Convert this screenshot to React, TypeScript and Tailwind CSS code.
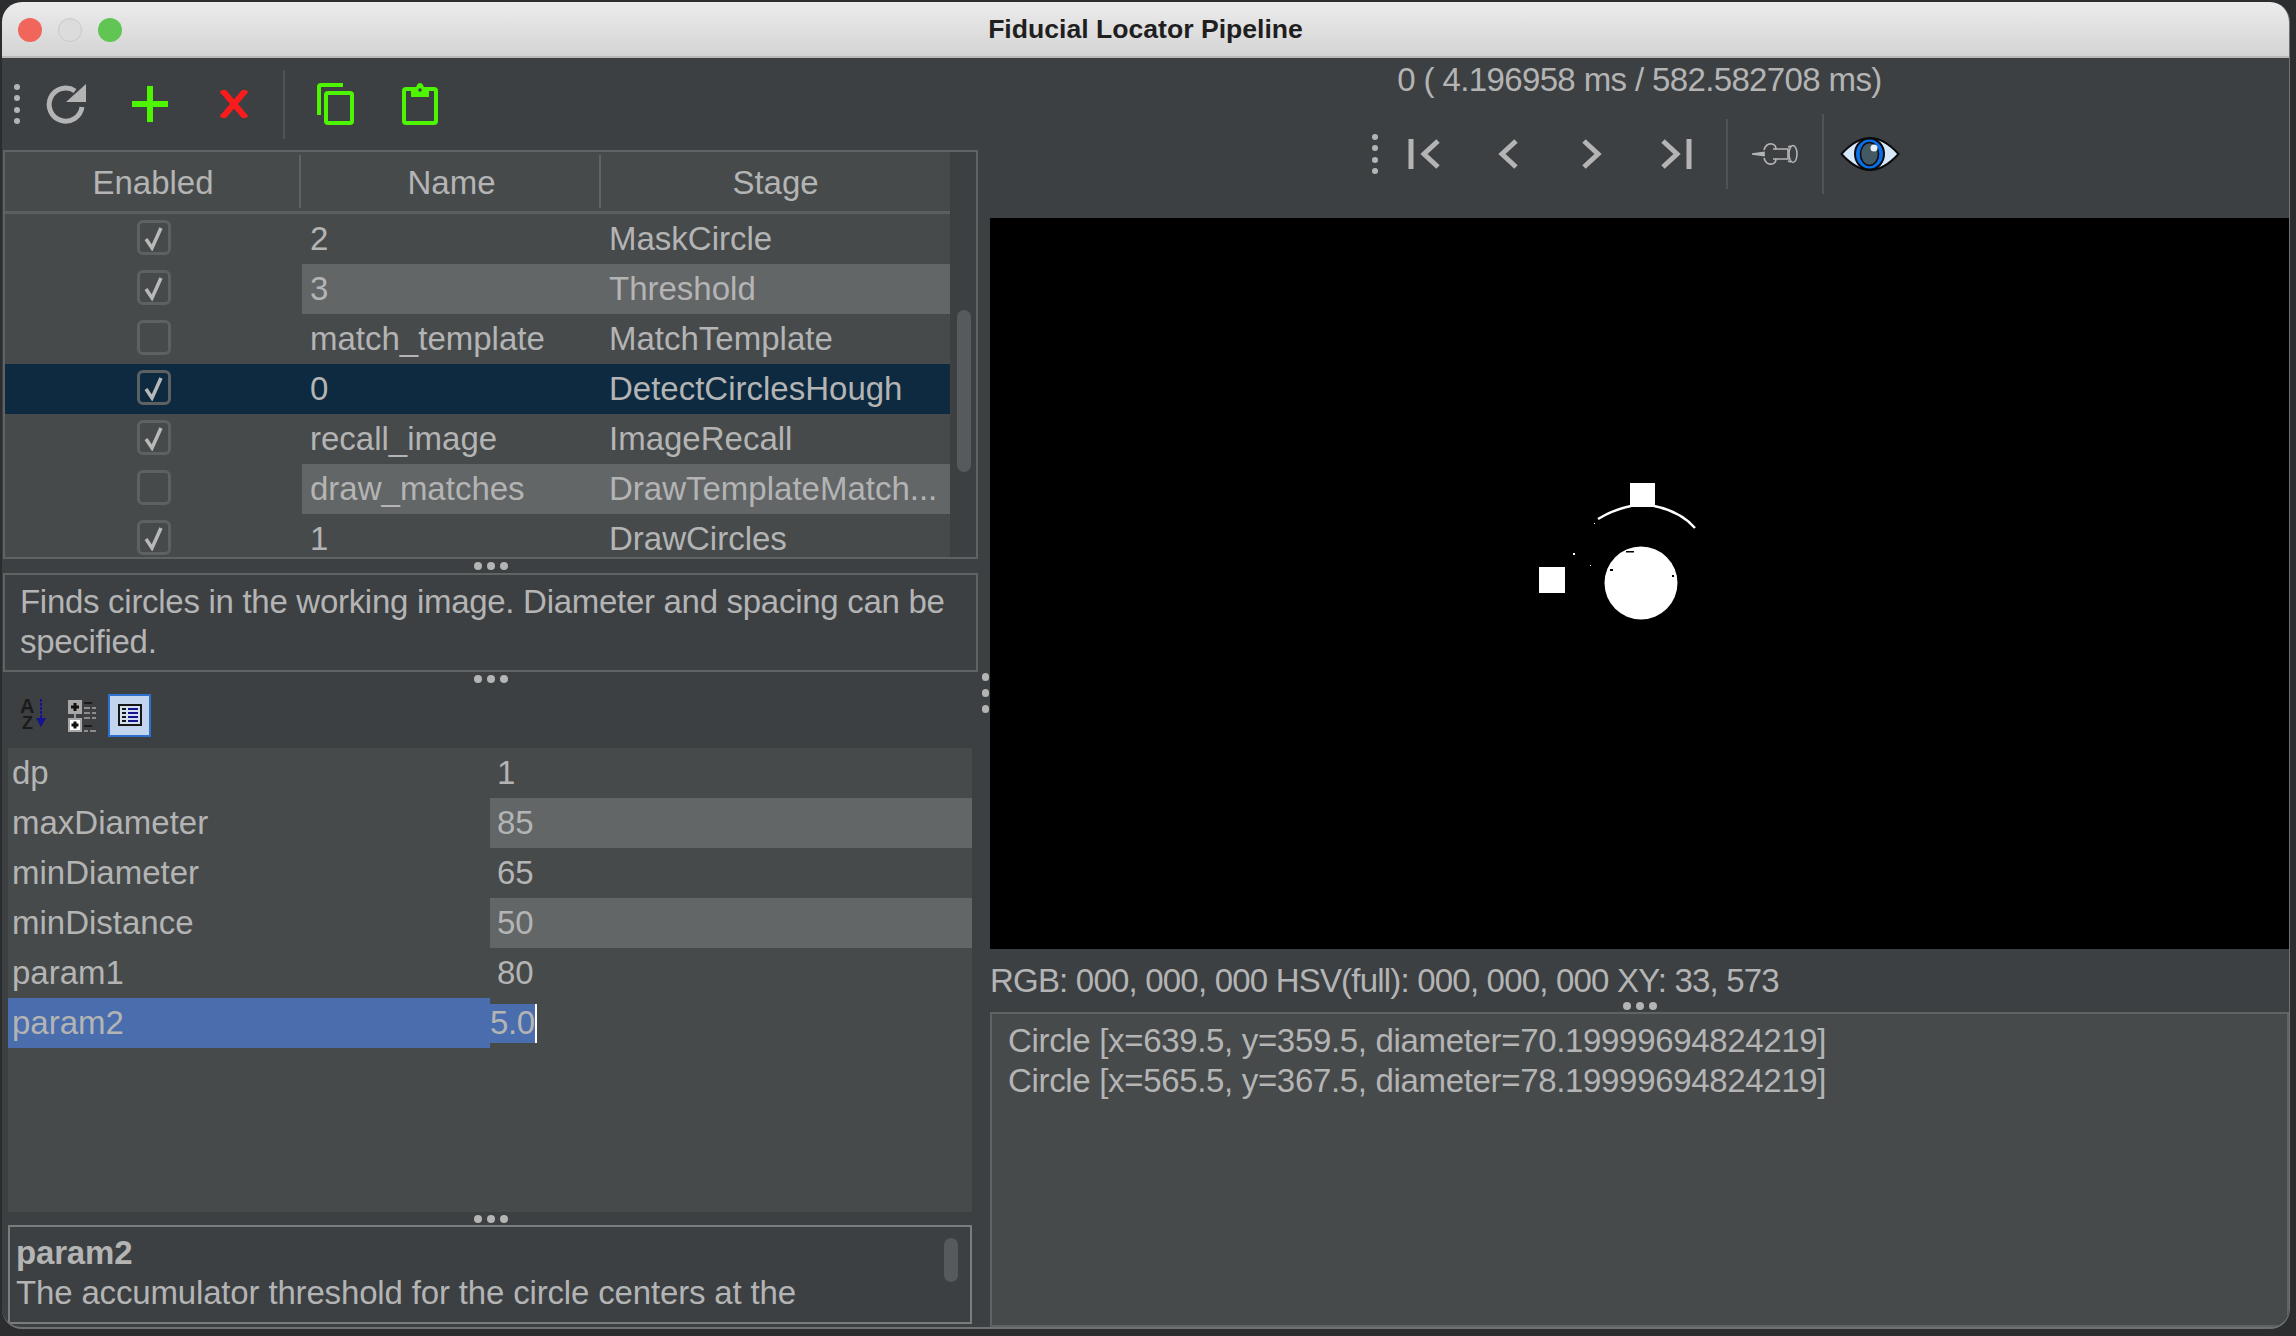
import type { ReactNode } from "react";

const rows = [
  { on: true, name: "2", stage: "MaskCircle" },
  { on: true, name: "3", stage: "Threshold", alt: true },
  { on: false, name: "match_template", stage: "MatchTemplate" },
  { on: true, name: "0", stage: "DetectCirclesHough", selected: true },
  { on: true, name: "recall_image", stage: "ImageRecall" },
  { on: false, name: "draw_matches", stage: "DrawTemplateMatch...", alt: true },
  { on: true, name: "1", stage: "DrawCircles" },
];

const props = [
  { name: "dp", value: "1" },
  { name: "maxDiameter", value: "85", alt: true },
  { name: "minDiameter", value: "65" },
  { name: "minDistance", value: "50", alt: true },
  { name: "param1", value: "80" },
];

function GripH({ className = "" }: { className?: string }) {
  return (
    <div className={`flex items-center justify-center gap-[5px] ${className}`}>
      <span className="h-[8px] w-[8px] rounded-full bg-[#b4b4b4]" />
      <span className="h-[8px] w-[8px] rounded-full bg-[#b4b4b4]" />
      <span className="h-[8px] w-[8px] rounded-full bg-[#b4b4b4]" />
    </div>
  );
}

function GripV() {
  return (
    <div className="flex w-[6px] shrink-0 flex-col gap-[5.5px]">
      <span className="h-[6px] w-[6px] rounded-full bg-[#b4b4b4]" />
      <span className="h-[6px] w-[6px] rounded-full bg-[#b4b4b4]" />
      <span className="h-[6px] w-[6px] rounded-full bg-[#b4b4b4]" />
      <span className="h-[6px] w-[6px] rounded-full bg-[#b4b4b4]" />
    </div>
  );
}

function ToolButton({ children }: { children: ReactNode }) {
  return <div className="flex h-[50px] w-[84px] shrink-0 items-center justify-center">{children}</div>;
}

function Check({ on }: { on: boolean }) {
  return (
    <div className="flex h-[35px] w-[34px] items-center justify-center rounded-[6px] border-[3px] border-[#5d6162]">
      {on && (
        <svg width="22" height="26" viewBox="0 0 22 26">
          <path d="M3 14 L9 23 L18 3" fill="none" stroke="#b8b8b8" strokeWidth="3.5" />
        </svg>
      )}
    </div>
  );
}

function Refresh() {
  return (
    <svg width="42" height="42" viewBox="0 0 42 42">
      <path d="M30 8 A 16.5 16.5 0 1 0 37 24" fill="none" stroke="#b4b4b4" strokeWidth="5" />
      <path d="M41 1 L41 19 L21 19 Z" fill="#b4b4b4" />
    </svg>
  );
}

function Plus() {
  return (
    <svg width="36" height="36" viewBox="0 0 36 36">
      <path d="M18 0 V36 M0 18 H36" stroke="#4ef500" strokeWidth="6" />
    </svg>
  );
}

function Cross() {
  return (
    <svg width="30" height="28" viewBox="0 0 30 28">
      <path d="M3 0 L27 28 M27 0 L3 28" stroke="#fa1c1c" strokeWidth="6" />
    </svg>
  );
}

function Copy() {
  return (
    <svg width="38" height="42" viewBox="0 0 38 42">
      <rect x="10" y="10" width="26" height="30" rx="2" fill="none" stroke="#4ef500" strokeWidth="4" />
      <path d="M3 32 V4 Q3 2 5 2 H27" fill="none" stroke="#4ef500" strokeWidth="4" />
    </svg>
  );
}

function Paste() {
  return (
    <svg width="36" height="42" viewBox="0 0 36 42">
      <rect x="2" y="6" width="32" height="34" rx="2" fill="none" stroke="#4ef500" strokeWidth="4" />
      <path d="M9 5 H14 Q15 0 18 0 Q21 0 22 5 H27 V14 H9 Z" fill="#4ef500" />
      <circle cx="18" cy="7" r="1.8" fill="#3c4043" />
    </svg>
  );
}

function NavIcon({ kind }: { kind: "first" | "prev" | "next" | "last" }) {
  const d = {
    first: "M3 0 V30 M30 2 L16 15 L30 28",
    prev: "M19 2 L5 15 L19 28",
    next: "M3 2 L17 15 L3 28",
    last: "M29 0 V30 M3 2 L17 15 L3 28",
  }[kind];
  const w = kind === "first" || kind === "last" ? 32 : 22;
  return (
    <svg width={w} height="30" viewBox={`0 0 ${w} 30`}>
      <path d={d} fill="none" stroke="#b4b4b4" strokeWidth="5" />
    </svg>
  );
}

function Pin() {
  return (
    <svg width="46" height="24" viewBox="0 0 46 24" fill="none" stroke="#b4b4b4" strokeWidth="1.6">
      <path d="M0 12 L12 10.5 V13.5 Z" fill="#b4b4b4" />
      <path d="M12 8 Q14 1 20 2 Q24 3 24 7 H36 V17 H24 Q24 21 20 22 Q14 23 12 16" />
      <ellipse cx="41" cy="12" rx="4" ry="8.5" />
      <path d="M36 5 L39 4 M36 19 L39 20 M21 7 H24 M21 17 H24" />
    </svg>
  );
}

function Eye() {
  return (
    <svg width="60" height="34" viewBox="0 0 60 34">
      <path d="M1.5 17 Q16 1 30 1 Q44 1 58.5 17 Q44 33 30 33 Q16 33 1.5 17 Z" fill="#d6e8fb" stroke="#0b0b0b" strokeWidth="2" />
      <ellipse cx="29.5" cy="17" rx="14.5" ry="15.5" fill="#0a6fe6" stroke="#0b0b0b" strokeWidth="2" />
      <ellipse cx="29.5" cy="17" rx="9" ry="11.5" fill="#435a64" stroke="#0b0b0b" strokeWidth="1.5" />
      <circle cx="34" cy="11" r="3.5" fill="#e8f1f8" />
    </svg>
  );
}

function SortIcon() {
  return (
    <svg width="28" height="34" viewBox="0 0 28 34" className="overflow-visible">
      <text x="0" y="15" fontSize="20" fontWeight="700" fontFamily="Liberation Sans, sans-serif" fill="#1b1b1b">A</text>
      <text x="2" y="31" fontSize="18" fontWeight="700" fontFamily="Liberation Sans, sans-serif" fill="#1b1b1b">Z</text>
      <path d="M21 1 V29" stroke="#14148c" strokeWidth="2" strokeDasharray="3 1" />
      <path d="M16 20 H26 L21 29 Z" fill="#14148c" />
    </svg>
  );
}

function CategoryIcon() {
  return (
    <svg width="30" height="33" viewBox="0 0 30 33">
      <rect x="0" y="1" width="14" height="14" fill="#a8a8a8" />
      <rect x="5.5" y="4" width="3" height="8" fill="#111" />
      <rect x="3" y="6.5" width="8" height="3" fill="#111" />
      <path d="M7 15 V19" stroke="#9a9a9a" strokeWidth="2" />
      <rect x="0" y="19" width="14" height="14" fill="#a8a8a8" />
      <rect x="2" y="21" width="10" height="10" fill="#fff" />
      <rect x="5.5" y="22.5" width="3" height="7" fill="#111" />
      <rect x="3.5" y="24.5" width="7" height="3" fill="#111" />
      <path d="M16 4 H24 M16 27 H24" stroke="#1b1b1b" strokeWidth="2" />
      <path d="M16 9 H22 M24 9 H28 M16 14 H22 M24 14 H28 M16 19 H22 M24 19 H28 M16 32 H20 M22 32 H28" stroke="#8c8c8c" strokeWidth="2" />
    </svg>
  );
}

function DetailIcon() {
  return (
    <svg width="24" height="22" viewBox="0 0 24 22">
      <rect x="1" y="1" width="22" height="20" fill="#d5dff2" stroke="#171717" strokeWidth="2" />
      <path d="M4 5 H8 M4 9 H8 M4 13 H8 M4 17 H8" stroke="#171717" strokeWidth="2" />
      <path d="M10 5 H20 M10 9 H20 M10 13 H20 M10 17 H20" stroke="#14148c" strokeWidth="2" />
    </svg>
  );
}

function TaskTable() {
  return (
    <div className="ml-px flex h-[409px] w-[975px] shrink-0 overflow-hidden border-2 border-[#5f6364]">
      <div className="w-[945px] shrink-0 overflow-hidden bg-[#464a4b]">
        <div className="grid h-[62px] grid-cols-[296px_300px_349px] border-b-[3px] border-[#5b5f60]">
          <div className="my-[3px] flex items-center justify-center border-r-2 border-[#5f6364] pl-[2px] pt-[2px]">Enabled</div>
          <div className="my-[3px] flex items-center justify-center border-r-2 border-[#5f6364] pl-[3px] pt-[2px]">Name</div>
          <div className="my-[3px] flex items-center justify-center pt-[2px]">Stage</div>
        </div>
        {rows.map((r) => (
          <div
            key={r.stage}
            className={`grid h-[50px] grid-cols-[297px_299px_349px] ${r.selected ? "bg-[#0d2a40]" : ""}`}
          >
            <div className="flex items-center justify-center pb-[3px]">
              <Check on={r.on} />
            </div>
            <div className={`flex items-center pl-[8px] ${r.alt ? "bg-[#626667]" : ""}`}>{r.name}</div>
            <div className={`flex items-center whitespace-nowrap pl-[8px] ${r.alt ? "bg-[#626667]" : ""}`}>{r.stage}</div>
          </div>
        ))}
      </div>
      <div className="flex-1 bg-[#3c4043] pl-[7px] pt-[158px]">
        <div className="h-[162px] w-[14px] rounded-full bg-[#565a5c]" />
      </div>
    </div>
  );
}

function PropertyGrid() {
  return (
    <div className="ml-[6px] h-[464px] w-[964px] shrink-0 bg-[#464a4b]">
      {props.map((p) => (
        <div key={p.name} className="flex h-[50px]">
          <div className="flex w-[482px] items-center pl-[4px]">{p.name}</div>
          <div className={`flex flex-1 items-center pl-[7px] ${p.alt ? "bg-[#626667]" : ""}`}>{p.value}</div>
        </div>
      ))}
      <div className="flex h-[50px]">
        <div className="flex w-[482px] items-center bg-[#4a6dad] pl-[4px]">param2</div>
        <div className="flex h-[39px] items-center self-center border-r-2 border-white bg-[#4a6dad] tracking-[-0.4px]">5.0</div>
      </div>
    </div>
  );
}

function ThresholdPreview() {
  return (
    <svg width="1299" height="731" viewBox="0 0 1299 731" className="block shrink-0">
      <rect width="1299" height="731" fill="#000" />
      <g fill="#fff" transform="translate(-990 -218)">
        <rect x="1630" y="483" width="25" height="24" />
        <rect x="1539" y="567" width="26" height="26" />
        <circle cx="1641" cy="583" r="36.5" />
        <rect x="1573" y="553" width="2" height="2" />
        <rect x="1590" y="565" width="1" height="1" />
        <rect x="1594" y="523" width="1" height="1" />
      </g>
      <path d="M608 301 Q622 292 641 288 M664 288 Q690 293 705 310" fill="none" stroke="#fff" strokeWidth="2.5" />
      <g fill="#000" transform="translate(-990 -218)">
        <rect x="1626" y="551" width="8" height="1.5" />
        <rect x="1610" y="569" width="3" height="2" />
        <rect x="1672" y="575" width="2" height="2" />
      </g>
    </svg>
  );
}

export default function App() {
  return (
    <div className="h-[1336px] w-[2296px] overflow-hidden bg-[#2b2d2f] pl-[2px] pt-[2px] font-['Liberation_Sans',sans-serif] text-[33px] leading-[40px] text-[#b4b4b4]">
      <div className="flex h-[1327px] w-[2288px] flex-col overflow-hidden rounded-[20px] border-b-2 border-r border-[#6f7273] bg-[#3c4043]">
        {/* title bar */}
        <div className="relative flex h-[56px] shrink-0 items-center justify-center border-b-2 border-[#b9b9b9] bg-gradient-to-b from-[#ececec] to-[#d4d4d4]">
          <div className="absolute left-[16px] top-[16px] flex gap-[16px]">
            <span className="h-[24px] w-[24px] rounded-full bg-[#f0665a]" />
            <span className="h-[24px] w-[24px] rounded-full border border-[#c8c8c8] bg-[#dcdcdc]" />
            <span className="h-[24px] w-[24px] rounded-full bg-[#61c554]" />
          </div>
          <span className="text-[26.6px] font-bold leading-none text-[#1f1f1f]">Fiducial Locator Pipeline</span>
        </div>

        <div className="flex min-h-0 flex-1">
          {/* left column */}
          <div className="flex w-[978px] shrink-0 flex-col">
            <div className="flex h-[92px] shrink-0 items-center pl-[12px]">
              <GripV />
              <div className="ml-[4px] flex items-center">
                <ToolButton>
                  <Refresh />
                </ToolButton>
                <ToolButton>
                  <Plus />
                </ToolButton>
                <ToolButton>
                  <Cross />
                </ToolButton>
              </div>
              <div className="ml-[7px] h-[69px] w-[2px] bg-[#4f5355]" />
              <div className="ml-[8px] flex items-center">
                <ToolButton>
                  <Copy />
                </ToolButton>
                <div className="ml-px">
                  <ToolButton>
                    <Paste />
                  </ToolButton>
                </div>
              </div>
            </div>

            <TaskTable />
            <GripH className="h-[14px] shrink-0" />

            <div className="ml-px h-[99px] w-[975px] shrink-0 border-2 border-[#5f6364] px-[15px] pt-[7px] tracking-[-0.29px]">
              Finds circles in the working image. Diameter and spacing can be specified.
            </div>
            <GripH className="h-[14px] shrink-0" />

            <div className="flex h-[62px] shrink-0 items-center pb-[4px] pl-[18px]">
              <SortIcon />
              <div className="ml-[20px]">
                <CategoryIcon />
              </div>
              <div className="ml-[10px] flex h-[43px] w-[43px] items-center justify-center border-2 border-[#2f6fce] bg-[#c2d4ee]">
                <DetailIcon />
              </div>
            </div>

            <PropertyGrid />
            <GripH className="h-[13px] shrink-0" />

            <div className="ml-[6px] flex h-[99px] w-[964px] shrink-0 border-2 border-[#7a7d7e] pl-[6px]">
              <div className="flex-1 pt-[6px] tracking-[-0.16px]">
                <div className="font-bold">param2</div>
                <div>The accumulator threshold for the circle centers at the</div>
              </div>
              <div className="mr-[12px] mt-[11px] h-[44px] w-[14px] rounded-full bg-[#565a5c]" />
            </div>
          </div>

          {/* splitter */}
          <div className="flex w-[10px] shrink-0 flex-col items-center justify-start gap-[8px] pt-[615px]">
            <span className="h-[8px] w-[7px] rounded-full bg-[#b4b4b4]" />
            <span className="h-[8px] w-[7px] rounded-full bg-[#b4b4b4]" />
            <span className="h-[8px] w-[7px] rounded-full bg-[#b4b4b4]" />
          </div>

          {/* right column */}
          <div className="flex min-w-0 flex-1 flex-col">
            <div className="flex h-[44px] shrink-0 items-center justify-center tracking-[-0.63px]">0 ( 4.196958 ms / 582.582708 ms)</div>
            <div className="mb-[12px] flex h-[104px] shrink-0 items-center pl-[382px]">
              <GripV />
              <div className="ml-[4px] flex items-center">
                <ToolButton>
                  <NavIcon kind="first" />
                </ToolButton>
                <ToolButton>
                  <NavIcon kind="prev" />
                </ToolButton>
                <ToolButton>
                  <NavIcon kind="next" />
                </ToolButton>
                <ToolButton>
                  <NavIcon kind="last" />
                </ToolButton>
              </div>
              <div className="ml-[8px] h-[70px] w-[2px] bg-[#4f5355]" />
              <div className="ml-[24px]">
                <Pin />
              </div>
              <div className="ml-[24px] h-[80px] w-[2px] bg-[#4f5355]" />
              <div className="ml-[16px]">
                <Eye />
              </div>
            </div>

            <ThresholdPreview />

            <div className="shrink-0 whitespace-nowrap pt-[14px] leading-[36px] tracking-[-0.8px]">
              RGB: 000, 000, 000 HSV(full): 000, 000, 000 XY: 33, 573
            </div>
            <GripH className="h-[13px] shrink-0" />
            <div className="min-h-0 flex-1 border-2 border-[#5f6364] bg-[#464a4b] px-[16px] pt-[7px] tracking-[-0.33px]">
              <div>Circle [x=639.5, y=359.5, diameter=70.19999694824219]</div>
              <div>Circle [x=565.5, y=367.5, diameter=78.19999694824219]</div>
            </div>
          </div>
        </div>
      </div>
    </div>
  );
}
